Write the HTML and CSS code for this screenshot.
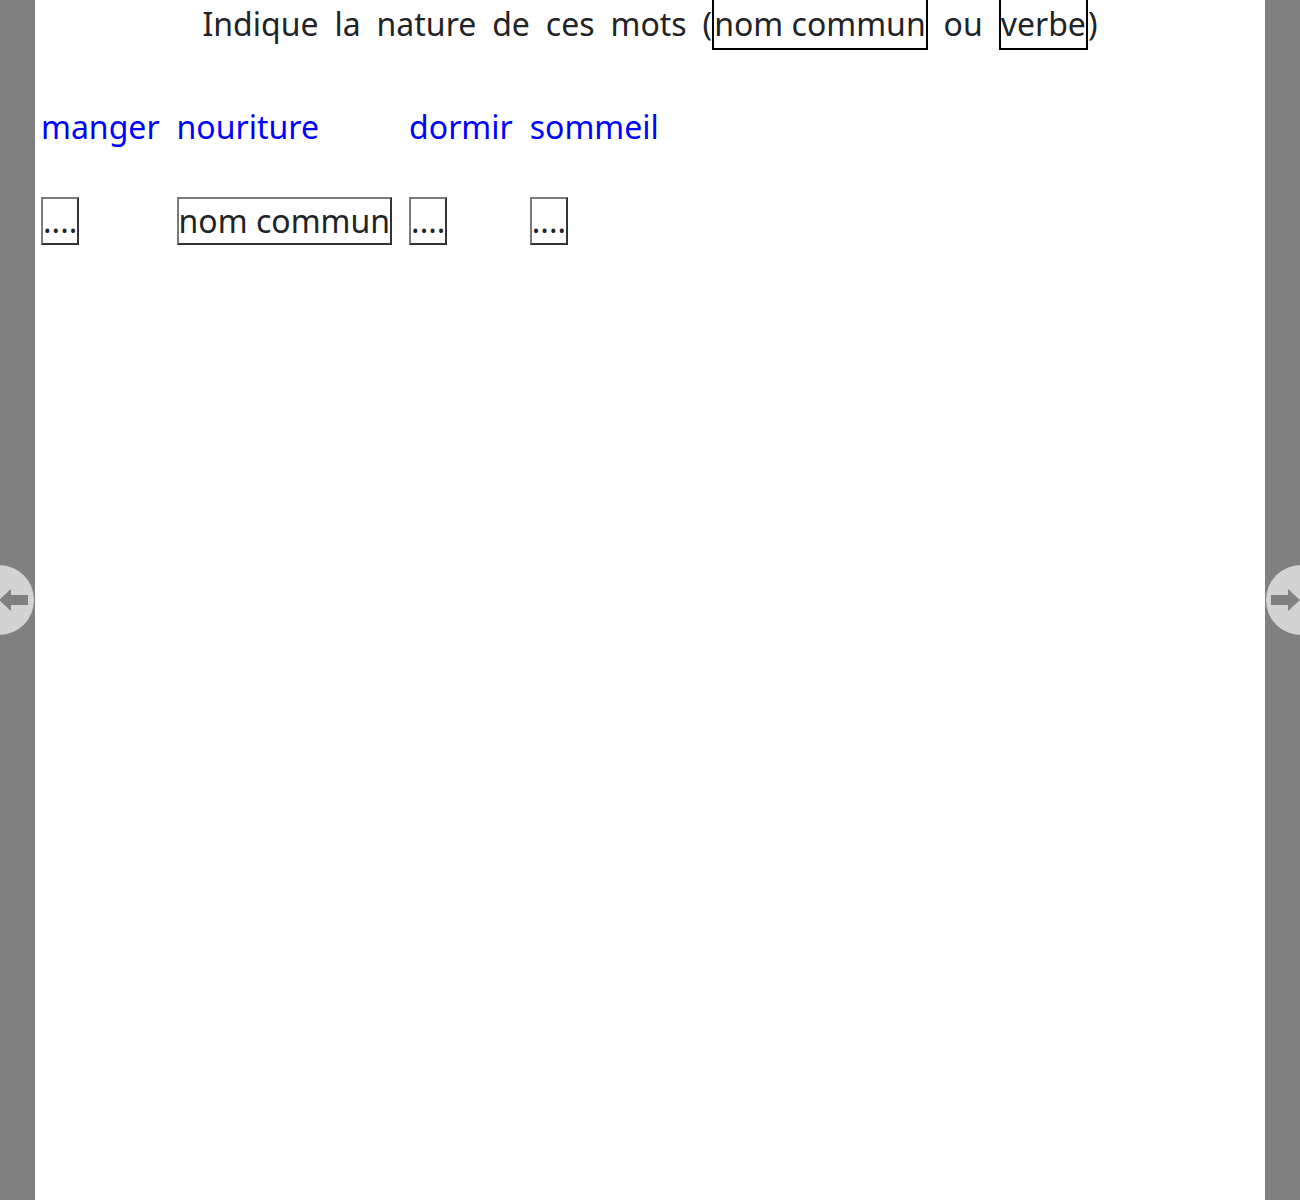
FILE: index.html
```html
<!DOCTYPE html>
<html lang="fr">
<head>
<meta charset="utf-8">
<title>Nature des mots</title>
<link rel="stylesheet" href="styles.css">
</head>
<body>
<div class="page">
  <p class="consigne">Indique la nature de ces mots (<span class="tag">nom commun</span> ou <span class="tag">verbe</span>)</p>
  <div class="exercice">
    <div class="mot">manger</div>
    <div class="mot">nouriture</div>
    <div class="mot">dormir</div>
    <div class="mot">sommeil</div>
    <div class="cell"><span class="reponse">....</span></div>
    <div class="cell"><span class="reponse">nom commun</span></div>
    <div class="cell"><span class="reponse">....</span></div>
    <div class="cell"><span class="reponse">....</span></div>
  </div>
</div>
<a class="nav nav-prev" href="#" aria-label="Page précédente">
  <svg width="32" height="24" viewBox="0 0 32 24"><path d="M0 12 L12 1 L12 7 L29 7 L29 17 L12 17 L12 23 Z" fill="#808080"/></svg>
</a>
<a class="nav nav-next" href="#" aria-label="Page suivante">
  <svg width="32" height="24" viewBox="0 0 32 24"><path d="M32 12 L20 1 L20 7 L3 7 L3 17 L20 17 L20 23 Z" fill="#808080"/></svg>
</a>
</body>
</html>
```
FILE: styles.css
```css
html, body {
  margin: 0;
  padding: 0;
}
body {
  background: #808080;
  font-family: "Noto Sans", "Open Sans", sans-serif;
  color: #222326;
  overflow: hidden;
}
.page {
  margin: 0 35px;
  min-height: 1200px;
  background: #ffffff;
  padding: 2px 0 0 6px;
  box-sizing: border-box;
}
.consigne {
  margin: 0;
  font-size: 32px;
  line-height: normal;
  text-align: center;
  word-spacing: 7.6px;
  padding-right: 6px;
}
.tag {
  border: 2px solid #000;
  padding: 2px 0 3px;
  word-spacing: 0;
}
.exercice {
  display: grid;
  grid-template-columns: repeat(4, auto);
  justify-content: start;
  column-gap: 17px;
  row-gap: 49px;
  margin-top: 60px;
  font-size: 32px;
  line-height: normal;
}
.mot {
  color: #0000ff;
}
.reponse {
  display: inline-block;
  border: 2px solid;
  border-color: #7a7a7a #333 #333 #7a7a7a;
  padding-bottom: 1px;
}
.nav {
  position: fixed;
  top: 565px;
  width: 70px;
  height: 70px;
  border-radius: 50%;
  background: #d3d3d3;
  display: flex;
  align-items: center;
}
.nav-prev {
  left: -36px;
  justify-content: flex-end;
}
.nav-prev svg {
  margin-right: 3px;
}
.nav-next {
  right: -36px;
  justify-content: flex-start;
}
.nav-next svg {
  margin-left: 2px;
}
```
